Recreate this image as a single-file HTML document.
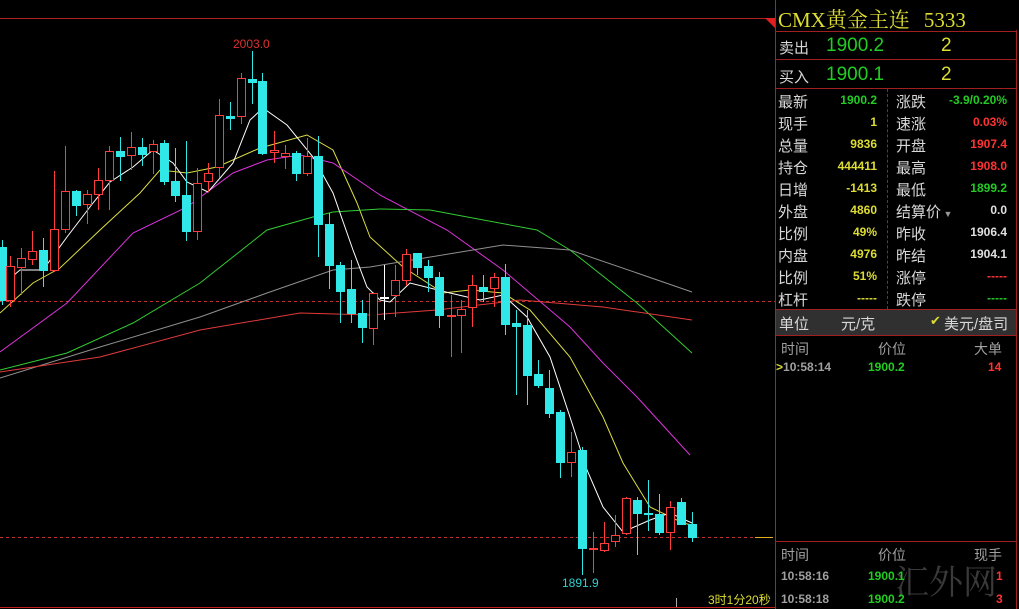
<!DOCTYPE html>
<html><head><meta charset="utf-8">
<style>
*{margin:0;padding:0;box-sizing:border-box}
body{width:1019px;height:609px;background:#000;overflow:hidden;position:relative;font-family:"Liberation Sans","Noto Sans CJK SC",sans-serif;}
.a{position:absolute;white-space:nowrap}
.lb{color:#d8d8d8;font-size:15px}
.v{font-size:12px;font-weight:bold;text-align:right}
.g{color:#22cc22}.y{color:#dddd33}.r{color:#ff3333}.w{color:#e0e0e0}.gr{color:#a0a0a0}
.hl{position:absolute;height:1px;background:#a02020}
.vl{position:absolute;width:1px;background:#a02020}
</style></head><body>
<svg id="c" class="a" style="left:0;top:0" width="775" height="609">
<line x1="0" y1="18.5" x2="775" y2="18.5" stroke="#b02020"/>
<polygon points="765,18 775,18 775,28" fill="#e02020"/>
<line x1="0" y1="301.5" x2="775" y2="301.5" stroke="#c83030" stroke-dasharray="3,3"/>
<line x1="0" y1="537.5" x2="755" y2="537.5" stroke="#c83030" stroke-dasharray="3,3"/>
<line x1="755" y1="537.5" x2="773" y2="537.5" stroke="#e0b020"/>
<line x1="0" y1="607.5" x2="775" y2="607.5" stroke="#c02020"/>
<line x1="676.5" y1="598" x2="676.5" y2="607" stroke="#aaa"/>
<text x="233" y="48" fill="#e03030" font-size="12" font-family="Liberation Sans">2003.0</text>
<text x="562" y="587" fill="#30d0d0" font-size="12" font-family="Liberation Sans">1891.9</text>
<text x="708" y="604" fill="#dddd33" font-size="12" font-family="Liberation Sans,Noto Sans CJK SC">3时1分20秒</text>
</svg>
<div class="vl" style="left:775px;top:0;height:609px;background:#b02020"></div>
<div class="vl" style="left:1016px;top:30px;height:579px"></div>
<div class="a y" style="left:778px;top:4px;font-size:21px;font-family:'Liberation Serif','Noto Serif CJK SC',serif;">CMX黄金主连<span style="margin-left:14px">5333</span></div>
<div class="hl" style="left:775px;top:31px;width:242px"></div>
<div class="a lb" style="left:779px;top:37px;font-size:15px">卖出</div>
<div class="a g" style="left:826px;top:35px;font-size:19px">1900.2</div>
<div class="a y" style="left:941px;top:35px;font-size:19px">2</div>
<div class="hl" style="left:775px;top:59px;width:242px"></div>
<div class="a lb" style="left:779px;top:66px;font-size:15px">买入</div>
<div class="a g" style="left:826px;top:64px;font-size:19px">1900.1</div>
<div class="a y" style="left:941px;top:64px;font-size:19px">2</div>
<div class="hl" style="left:775px;top:88px;width:242px"></div>
<div class="a" style="left:887px;top:89px;width:0;height:220px;border-left:1px dashed #a02020"></div>
<div id="grid"></div>
<div class="hl" style="left:775px;top:309px;width:242px"></div>
<div class="a" style="left:776px;top:310px;width:240px;height:25px;background:#303030"></div>
<div class="a lb" style="left:779px;top:313px;font-size:15px">单位</div>
<div class="a lb" style="left:841px;top:313px;font-size:15px">元/克</div>
<div class="a" style="left:930px;top:313px;font-size:13px;color:#dddd33">✔</div>
<div class="a lb" style="left:944px;top:313px;font-size:15px">美元/盘司</div>
<div class="hl" style="left:775px;top:335px;width:242px"></div>
<div class="a gr" style="left:781px;top:339px;font-size:14px">时间</div>
<div class="a gr" style="left:878px;top:339px;font-size:14px">价位</div>
<div class="a gr" style="left:974px;top:339px;font-size:14px">大单</div>
<div class="a" style="left:776px;top:360px;font-size:12px;font-weight:bold"><span class="y">&gt;</span><span class="gr">10:58:14</span></div>
<div class="a g v" style="left:868px;top:360px;font-size:12px">1900.2</div>
<div class="a r v" style="left:988px;top:360px;font-size:12px">14</div>
<div class="hl" style="left:775px;top:541px;width:242px"></div>
<div class="a gr" style="left:781px;top:545px;font-size:14px">时间</div>
<div class="a gr" style="left:878px;top:545px;font-size:14px">价位</div>
<div class="a gr" style="left:974px;top:545px;font-size:14px">现手</div>
<div class="a" style="left:895px;top:555px;font-size:34px;color:#3a3a3a;font-family:'Noto Serif CJK SC',serif">汇外网</div>
<div class="a gr" style="left:781px;top:569px;font-size:12px;font-weight:bold">10:58:16</div>
<div class="a g" style="left:868px;top:569px;font-size:12px;font-weight:bold">1900.1</div>
<div class="a r" style="left:996px;top:569px;font-size:12px;font-weight:bold">1</div>
<div class="a gr" style="left:781px;top:592px;font-size:12px;font-weight:bold">10:58:18</div>
<div class="a g" style="left:868px;top:592px;font-size:12px;font-weight:bold">1900.2</div>
<div class="a r" style="left:996px;top:592px;font-size:12px;font-weight:bold">3</div>
<script>
var rows=[["最新","1900.2","g","涨跌","-3.9/0.20%","g"],["现手","1","y","速涨","0.03%","r"],["总量","9836","y","开盘","1907.4","r"],["持仓","444411","y","最高","1908.0","r"],["日增","-1413","y","最低","1899.2","g"],["外盘","4860","y","结算价","0.0","w"],["比例","49%","y","昨收","1906.4","w"],["内盘","4976","y","昨结","1904.1","w"],["比例","51%","y","涨停","-----","r"],["杠杆","-----","y","跌停","-----","g"]];
var h="";rows.forEach(function(r,i){var t=91+i*22;
h+='<div class="a lb" style="left:778px;top:'+t+'px">'+r[0]+'</div>';
h+='<div class="a v '+r[2]+'" style="left:820px;width:57px;top:'+(t+2)+'px">'+r[1]+'</div>';
h+='<div class="a lb" style="left:896px;top:'+t+'px">'+r[3]+(i==5?'<span style="color:#999;font-size:9px"> ▼</span>':'')+'</div>';
h+='<div class="a v '+r[5]+'" style="left:930px;width:77px;top:'+(t+2)+'px">'+r[4]+'</div>';});
document.getElementById("grid").innerHTML=h;
var C=[[2,'c',247,300,240,305],[10,'r',266,300,256,307],[21,'r',258,267,248,295],[32,'r',251,259,231,265],[43,'c',250,270,238,287],[54,'r',229,270,171,272],[65,'r',191,229,146,233],[76,'c',191,205,190,216],[87,'r',194,204,190,224],[98,'r',180,194,168,210],[109,'r',151,180,146,210],[120,'c',151,156,137,181],[131,'r',147,155,132,170],[142,'c',147,154,138,166],[153,'r',144,151,140,174],[164,'c',143,181,140,185],[175,'c',181,195,148,202],[186,'c',195,231,141,241],[197,'r',183,231,168,240],[208,'r',173,181,163,192],[219,'r',115,167,99,178],[230,'c',116,118,102,130],[241,'r',78,116,73,124],[252,'c',79,82,51,104],[262,'c',81,153,73,155],[274,'r',150,152,131,163],[285,'r',153,156,145,169],[296,'c',153,173,151,181],[307,'r',156,173,138,176],[318,'c',156,224,136,257],[329,'c',224,265,213,289],[340,'c',265,291,262,323],[351,'c',289,313,260,323],[362,'c',313,327,300,343],[373,'r',293,328,292,345],[384,'w',297,298,265,320],[395,'r',280,295,265,317],[406,'r',254,280,249,286],[417,'c',253,267,254,275],[428,'c',266,277,260,292],[439,'c',277,315,272,328],[451,'r',315,316,295,357],[461,'r',309,315,300,353],[472,'r',285,307,275,327],[483,'c',287,291,275,302],[494,'r',277,288,273,307],[505,'c',277,324,264,335],[516,'c',323,326,310,395],[527,'c',325,375,310,405],[538,'c',374,385,360,388],[549,'c',388,413,370,418],[560,'c',412,462,410,478],[571,'r',452,462,432,477],[582,'c',450,548,447,575],[593,'r',548,549,532,573],[604,'r',543,550,522,552],[615,'r',535,541,515,547],[626,'r',498,533,497,535],[637,'c',500,513,497,555],[648,'c',513,514,480,531],[659,'c',514,532,494,535],[670,'r',507,532,501,550],[681,'c',502,524,498,525],[692,'c',524,537,512,542]];
var s="";C.forEach(function(k){var x=k[0],col=k[1]=='r'?'#ff3c3c':k[1]=='c'?'#30e8e8':'#ffffff';
s+='<line x1="'+(x+.5)+'" y1="'+k[4]+'" x2="'+(x+.5)+'" y2="'+k[5]+'" stroke="'+col+'"/>';
var h=Math.max(1,k[3]-k[2]);
if(k[1]=='r')s+='<rect x="'+(x-3.5)+'" y="'+(k[2]+.5)+'" width="8" height="'+h+'" fill="#000" stroke="'+col+'"/>';
else s+='<rect x="'+(x-4)+'" y="'+k[2]+'" width="9" height="'+(h+1)+'" fill="'+col+'"/>';});
var L=[["#dddd44",[[0,313],[33,283],[60,268],[100,230],[140,193],[160,170],[187,173],[217,167],[260,148],[307,135],[333,150],[357,203],[370,237],[403,267],[443,293],[470,290],[503,293],[530,310],[570,357],[603,417],[623,463],[650,507],[683,523],[692,525]]],
["#dd33dd",[[0,352],[67,303],[133,233],[187,207],[233,173],[267,160],[300,155],[333,163],[380,195],[447,230],[503,270],[570,327],[603,363],[637,397],[690,455]]],
["#33cc33",[[0,370],[67,353],[133,323],[200,283],[267,230],[313,217],[333,212],[380,209],[430,210],[537,230],[570,250],[637,303],[692,353]]],
["#909090",[[0,378],[100,347],[200,317],[267,293],[333,270],[370,267],[503,245],[570,250],[637,273],[692,292]]],
["#e03a3a",[[0,372],[100,357],[200,330],[300,313],[370,315],[437,310],[520,300],[603,307],[692,320]]],
["#ffffff",[[0,287],[20,270],[43,270],[67,237],[93,203],[110,182],[133,167],[153,150],[173,163],[187,182],[208,192],[233,163],[250,120],[263,108],[287,125],[313,157],[333,193],[353,250],[367,287],[380,300],[390,302],[410,283],[450,293],[480,300],[503,295],[527,317],[550,357],[570,417],[587,470],[603,507],[623,532],[650,520],[670,513],[692,523]]]];
var m="";L.forEach(function(l){m+='<polyline fill="none" stroke="'+l[0]+'" stroke-width="1" points="'+l[1].map(function(p){return p.join(",")}).join(" ")+'"/>';});
var svg=document.getElementById("c");svg.insertAdjacentHTML("beforeend",m+s);
</script>
</body></html>
